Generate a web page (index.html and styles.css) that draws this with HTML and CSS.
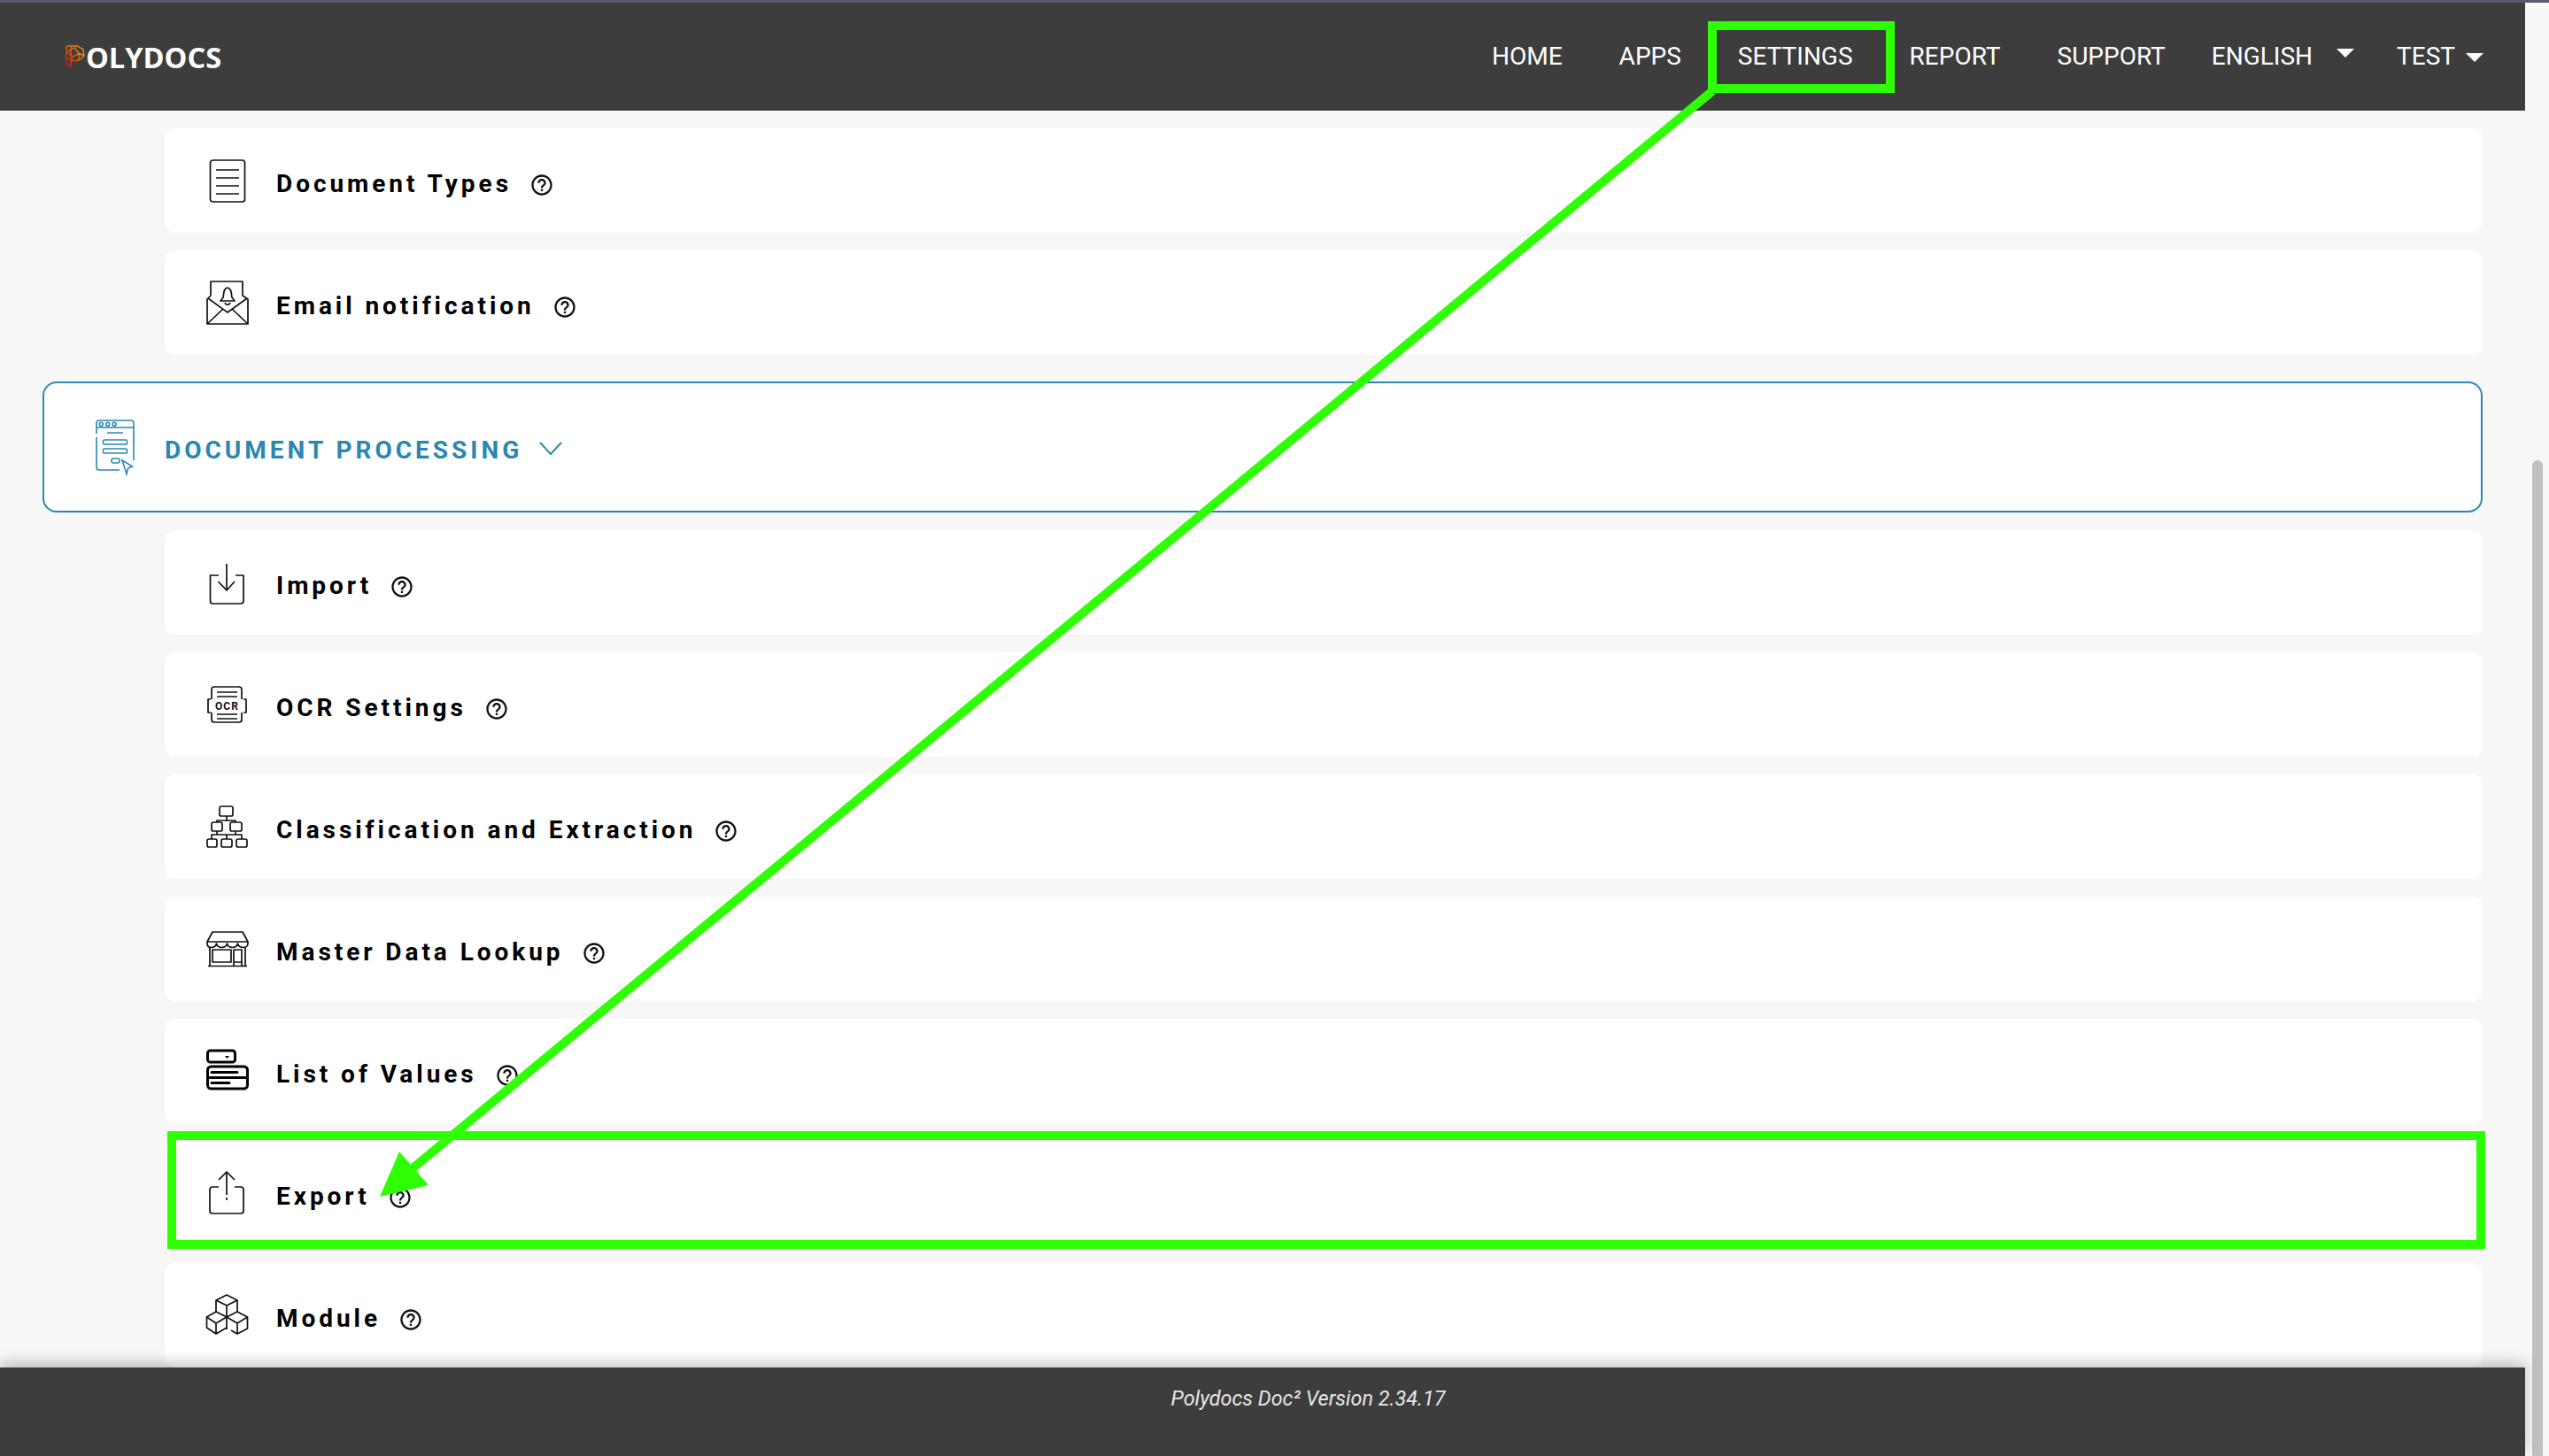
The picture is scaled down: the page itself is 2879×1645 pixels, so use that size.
FILE: index.html
```html
<!DOCTYPE html>
<html>
<head>
    <title>Polydocs Settings</title>
    <link rel="stylesheet" href="styles.css">
</head>
<body>
    <svg class="defs" width="0" height="0">
        <symbol id="help" viewBox="0 0 24 24">
            <path d="M11 18h2v-2h-2v2zm1-16C6.48 2 2 6.48 2 12s4.48 10 10 10 10-4.48 10-10S17.52 2 12 2zm0 18c-4.41 0-8-3.59-8-8s3.59-8 8-8 8 3.59 8 8-3.59 8-8 8zm0-14c-2.21 0-4 1.79-4 4h2c0-1.1.9-2 2-2s2 .9 2 2c0 2-3 1.75-3 5h2c0-2.25 3-2.5 3-5 0-2.21-1.79-4-4-4z"/>
        </symbol>
    </svg>

    <div class="topline"></div>
    <div class="shell">
        <div class="app">
            <header class="navbar">
                <div class="logo">
                    <svg class="logo-mark" viewBox="0 0 22 26">
                        <defs>
                            <linearGradient id="logo-grad" x1="1" y1="0" x2="0" y2="1">
                                <stop offset="0" stop-color="#f0a820"/>
                                <stop offset="0.5" stop-color="#d9601c"/>
                                <stop offset="1" stop-color="#b01216"/>
                            </linearGradient>
                        </defs>
                        <path d="M1 1H13L20 5L21 12L15 17L6 18M1 1V25M6 1V25M1 8L10 3L15 9L9 13L1 8M15 9L21 12M9 13L6 18L1 14M15 9L15 17M1 20L6 25" fill="none" stroke="url(#logo-grad)" stroke-width="1.4"/>
                    </svg>
                    <span class="logo-text">OLYDOCS</span>
                </div>
                <nav class="nav">
                    <a class="nav-item">HOME</a>
                    <a class="nav-item">APPS</a>
                    <a class="nav-item">SETTINGS</a>
                    <a class="nav-item">REPORT</a>
                    <a class="nav-item nav-support">SUPPORT</a>
                    <a class="nav-item nav-lang">ENGLISH<span class="caret caret-up"></span></a>
                    <a class="nav-item nav-user">TEST<span class="caret"></span></a>
                </nav>
            </header>

            <main class="content">
                <div class="card">
                    <svg class="ico" viewBox="0 0 48 52">
                        <rect x="4.5" y="3" width="39" height="47" rx="3"/>
                        <path d="M11 14H37M11 23H37M11 32H37M11 41H37"/>
                    </svg>
                    <span class="card-label">Document Types</span>
                    <svg class="help"><use href="#help"/></svg>
                </div>
                <div class="card">
                    <svg class="ico" viewBox="0 0 48 52">
                        <path d="M5 18V2H41V18M5 18L1 22V50H47V22L41 18M2 21L24 37L46 21M1 50L19 33M47 50L29 33"/>
                        <path d="M24 9C19 10 20 16 19 20L16 24H32L29 20C28 16 29 10 24 9ZM21 26C22 29 26 29 27 26"/>
                    </svg>
                    <span class="card-label">Email notification</span>
                    <svg class="help"><use href="#help"/></svg>
                </div>

                <div class="section">
                    <svg class="section-ico" viewBox="0 0 44 62">
                        <path d="M1 16V4Q1 1 4 1H40Q43 1 43 4V46M1 9H43M1 20V54Q1 57 4 57H27M13 15H31M30 46L41.5 53L36.5 55L35 61.5Z"/>
                        <circle cx="6.3" cy="5.3" r="2"/>
                        <circle cx="13.7" cy="5.3" r="2"/>
                        <circle cx="21" cy="5.3" r="2"/>
                        <rect x="8.5" y="23" width="27" height="5" rx="1.5"/>
                        <rect x="8.5" y="33" width="27" height="5" rx="1.5"/>
                        <rect x="18" y="44" width="9" height="5" rx="2"/>
                    </svg>
                    <span class="section-label">DOCUMENT PROCESSING</span>
                    <svg class="chevron" viewBox="0 0 26 15"><path d="M1 1L13 14L25 1"/></svg>
                </div>

                <div class="card">
                    <svg class="ico" viewBox="0 0 48 52">
                        <path d="M14 18H4.5V47Q4.5 50 7.5 50H39Q42 50 42 47V18H33M23 5V35M13.5 25L23 35L32 25"/>
                    </svg>
                    <span class="card-label">Import</span>
                    <svg class="help"><use href="#help"/></svg>
                </div>
                <div class="card">
                    <svg class="ico" viewBox="0 0 48 52">
                        <path d="M6 20V9Q6 6 9 6H37Q40 6 40 9V20M6 35V43Q6 46 9 46H37Q40 46 40 43V35M12 12H35M12 17H35M12 37H35M12 42H35M5 20H2V35H5M42 20H45V35H42"/>
                        <text class="ocr-text" x="23.5" y="32">OCR</text>
                    </svg>
                    <span class="card-label">OCR Settings</span>
                    <svg class="help"><use href="#help"/></svg>
                </div>
                <div class="card">
                    <svg class="ico" viewBox="0 0 48 52">
                        <rect x="15" y="3" width="15" height="11" rx="2"/>
                        <rect x="6" y="21" width="12" height="10" rx="2"/>
                        <rect x="27" y="21" width="13" height="10" rx="2"/>
                        <rect x="1" y="40" width="11" height="9" rx="2"/>
                        <rect x="17" y="40" width="12" height="9" rx="2"/>
                        <rect x="34" y="40" width="12" height="9" rx="2"/>
                        <path d="M23 14V19M12 21V19H33V21M12 31V35M33 31V35M6 40V35H40V40M23 35V40"/>
                    </svg>
                    <span class="card-label">Classification and Extraction</span>
                    <svg class="help"><use href="#help"/></svg>
                </div>
                <div class="card">
                    <svg class="ico" viewBox="0 0 48 52">
                        <path d="M7 7H41L47 18V20C47 26 37 26 35.5 20C34 26 25 26 23.5 20C22 26 13 26 11.5 20C10 26 1 26 1 20V18ZM1 18H47"/>
                        <path d="M4 24V45M44 24V45M2 45.5H46"/>
                        <rect x="7" y="27" width="21" height="14"/>
                        <path d="M31 45V27H40V45M31 41H40"/>
                    </svg>
                    <span class="card-label">Master Data Lookup</span>
                    <svg class="help"><use href="#help"/></svg>
                </div>
                <div class="card">
                    <svg class="ico ico-bold" viewBox="0 0 48 52">
                        <rect x="1.5" y="3" width="31" height="13" rx="3"/>
                        <rect x="1.5" y="21" width="45" height="25" rx="4"/>
                        <path d="M1.5 33.5H46.5M6 27.5H35M6 39.5H26"/>
                        <path class="ico-dot" d="M21 9H26L23.5 12Z"/>
                    </svg>
                    <span class="card-label">List of Values</span>
                    <svg class="help"><use href="#help"/></svg>
                </div>
                <div class="card">
                    <svg class="ico" viewBox="0 0 48 52">
                        <path d="M14 19H7Q4 19 4 22V46Q4 49 7 49H39Q42 49 42 46V22Q42 19 39 19H32M23 2V28M23 31V34M14 11L23 2L32 11"/>
                    </svg>
                    <span class="card-label">Export</span>
                    <svg class="help"><use href="#help"/></svg>
                </div>
                <div class="card">
                    <svg class="ico" viewBox="0 0 48 52">
                        <path d="M23 3L35 9L23 15L11 9ZM11 9V22M35 9V22M23 15V42"/>
                        <path d="M11 22L23 28L11 35L0.5 28ZM0.5 28V40L11 47L23 40M11 35V47"/>
                        <path d="M35 22L46.5 28L35 35L23 28ZM46.5 28V41L35 47L28 43M35 35V47"/>
                    </svg>
                    <span class="card-label">Module</span>
                    <svg class="help"><use href="#help"/></svg>
                </div>
            </main>

            <footer class="footer">
                <span class="version">Polydocs Doc² Version 2.34.17</span>
            </footer>
        </div>
        <div class="rail"><div class="thumb"></div></div>
    </div>

    <!-- annotation drawn over the page -->
    <svg class="markup" width="2879" height="1645" viewBox="0 0 2879 1645">
        <rect x="1934" y="29" width="201" height="71"/>
        <rect x="194" y="1283" width="2608" height="123"/>
        <path d="M1934 103L466 1320"/>
        <polygon points="429,1352 451,1301 484,1339"/>
    </svg>
</body>
</html>
```

FILE: styles.css
```css
* {
    box-sizing: border-box;
}
html, body {
    height: 100%;
}
body {
    margin: 0;
    display: flex;
    flex-direction: column;
    overflow: hidden;
    position: relative;
    background-color: #f7f7f7;
    font-family: Roboto, "Liberation Sans", sans-serif;
}
.defs {
    position: absolute;
}
.topline {
    height: 3px;
    flex: none;
    background-color: #5b5c63;
}
.shell {
    flex: 1;
    display: flex;
    min-height: 0;
}
.app {
    flex: 1;
    display: flex;
    flex-direction: column;
    min-width: 0;
}
.rail {
    width: 27px;
    flex: none;
    padding: 517px 7px 0 8px;
}
.thumb {
    height: 100%;
    background-color: #c1c1c1;
    border-radius: 6px 6px 0 0;
}

/* navbar */
.navbar {
    height: 122px;
    flex: none;
    display: flex;
    align-items: center;
    justify-content: space-between;
    padding: 0 47px 0 74px;
    background-color: #3d3d3d;
}
.logo {
    display: flex;
    align-items: center;
    gap: 1px;
}
.logo-mark {
    width: 22px;
    height: 26px;
}
.logo-text {
    color: #fff;
    font-family: "Open Sans", sans-serif;
    font-size: 32.5px;
    font-weight: 700;
}
.nav {
    display: flex;
    align-items: center;
    padding-bottom: 2px;
}
.nav-item {
    display: flex;
    align-items: center;
    padding: 0 32px;
    color: #fff;
    font-size: 28px;
}
.nav-support {
    padding-right: 25px;
}
.nav-lang {
    padding: 0 48px 0 27px;
}
.nav-user {
    padding: 0;
}
.caret {
    width: 0;
    height: 0;
    margin-left: 12px;
    margin-top: 3px;
    border-left: 10px solid transparent;
    border-right: 10px solid transparent;
    border-top: 10px solid #fff;
}
.caret-up {
    margin-left: 27px;
    margin-top: -7px;
}

/* list */
.content {
    flex: 1;
    min-height: 0;
    overflow: hidden;
    padding: 20px 48px 0;
}
.card {
    height: 118px;
    flex: none;
    display: flex;
    align-items: center;
    margin: 0 0 20px 138px;
    padding-left: 47px;
    background-color: #fff;
    border-radius: 12px;
}
.card-label {
    margin-left: 31px;
    padding-top: 6px;
    color: #000;
    font-size: 28px;
    font-weight: 700;
    letter-spacing: 3.95px;
}
.help {
    width: 28px;
    height: 28px;
    margin: 10px 0 0 20px;
    fill: #111;
}
.ico {
    width: 48px;
    height: 52px;
    flex: none;
    overflow: visible;
    fill: none;
    stroke: #111;
    stroke-width: 1.7;
    stroke-linejoin: round;
}
.ico-bold {
    stroke: #000;
    stroke-width: 3;
    stroke-linecap: round;
}
.ico-dot {
    fill: #000;
    stroke: none;
}
.ocr-text {
    fill: #111;
    stroke: none;
    font-size: 12px;
    font-weight: 700;
    letter-spacing: 1px;
    text-anchor: middle;
}
.section {
    height: 148px;
    display: flex;
    align-items: center;
    margin: 30px 0 20px;
    padding-left: 58px;
    background-color: #fff;
    border: 2px solid #2b87b1;
    border-radius: 16px;
}
.section-ico {
    width: 44px;
    height: 62px;
    flex: none;
    overflow: visible;
    fill: none;
    stroke: #2b87b1;
    stroke-width: 1.6;
}
.section-label {
    margin-left: 34px;
    padding-top: 6px;
    color: #2b87b1;
    font-size: 28px;
    font-weight: 700;
    letter-spacing: 4px;
}
.chevron {
    width: 26px;
    height: 15px;
    margin: 3px 0 0 19px;
    fill: none;
    stroke: #2b87b1;
    stroke-width: 2;
}

/* footer */
.footer {
    height: 100px;
    flex: none;
    position: relative;
    padding: 21px 0 0 103px;
    text-align: center;
    background-color: #3d3d3d;
    box-shadow: 0 -6px 14px rgba(0, 0, 0, 0.22);
}
.version {
    color: #e6e6e6;
    font-size: 23.4px;
    font-style: italic;
}

/* green annotation */
.markup {
    position: absolute;
    top: 0;
    left: 0;
    pointer-events: none;
}
.markup rect {
    fill: none;
    stroke: #2fff05;
    stroke-width: 10;
}
.markup path {
    fill: none;
    stroke: #2fff05;
    stroke-width: 10;
}
.markup polygon {
    fill: #2fff05;
}
```
